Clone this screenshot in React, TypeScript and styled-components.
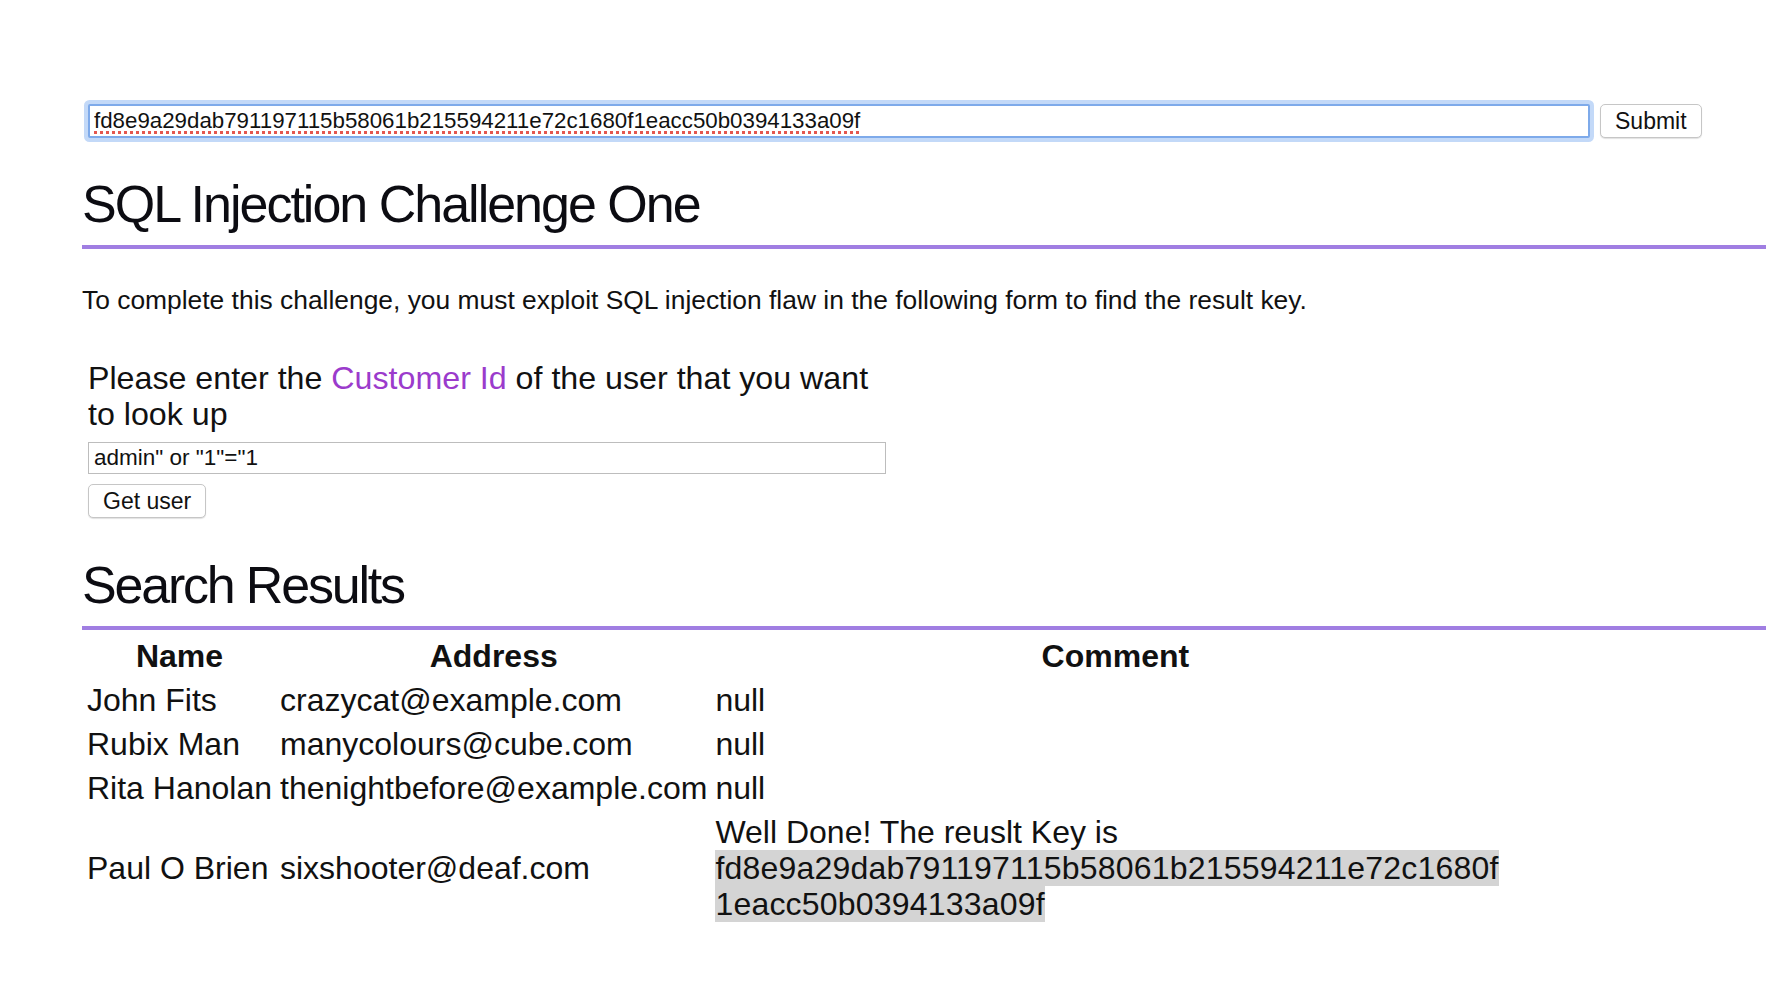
import React from 'react'
import styled, { createGlobalStyle } from 'styled-components'

const RESULT_KEY = 'fd8e9a29dab791197115b58061b215594211e72c1680f1eacc50b0394133a09f'

const users = [
  { name: 'John Fits', address: 'crazycat@example.com', comment: 'null' },
  { name: 'Rubix Man', address: 'manycolours@cube.com', comment: 'null' },
  { name: 'Rita Hanolan', address: 'thenightbefore@example.com', comment: 'null' },
  { name: 'Paul O Brien', address: 'sixshooter@deaf.com', comment: 'key' },
]

const App = () => {
  return (
    <>
      <GlobalStyle />
      <Page>
        <KeyForm onSubmit={(e) => e.preventDefault()}>
          <KeyInput defaultValue={RESULT_KEY} spellCheck={false} />
          <Button type='submit'>Submit</Button>
        </KeyForm>

        <Heading>SQL Injection Challenge One</Heading>
        <Intro>
          To complete this challenge, you must exploit SQL injection flaw in the following form to find the result key.
        </Intro>

        <LookupForm onSubmit={(e) => e.preventDefault()}>
          <Prompt>
            Please enter the <Accent>Customer Id</Accent> of the user that you want to look up
          </Prompt>
          <TextField defaultValue={'admin" or "1"="1'} />
          <Button type='submit' $top={10}>
            Get user
          </Button>
        </LookupForm>

        <Heading as='h2' $top={37} $bottom={11} $tracking={-2.2}>
          Search Results
        </Heading>

        <Results>
          <thead>
            <tr>
              <Th>Name</Th>
              <Th>Address</Th>
              <Th>Comment</Th>
            </tr>
          </thead>
          <tbody>
            {users.map((u) => (
              <tr key={u.name}>
                <Td>{u.name}</Td>
                <Td>{u.address}</Td>
                <Td $wide>
                  {u.comment === 'key' ? (
                    <>
                      Well Done! The reuslt Key is <Selected>{RESULT_KEY}</Selected>
                    </>
                  ) : (
                    u.comment
                  )}
                </Td>
              </tr>
            ))}
          </tbody>
        </Results>
      </Page>
    </>
  )
}

export default App

const GlobalStyle = createGlobalStyle`
  html, body {
    margin: 0;
    background: #ffffff;
  }

  body {
    font-family: "Liberation Sans", Arial, Helvetica, sans-serif;
    color: #111111;
  }
`

const Page = styled.div`
  padding: 104px 4px 40px 82px;
`

const KeyForm = styled.form`
  display: flex;
  align-items: center;
  gap: 10px;
  margin-left: 6px;
`

const KeyInput = styled.input`
  box-sizing: border-box;
  width: 1502px;
  height: 34px;
  padding: 0 4px;
  border: 2px solid #7eaaea;
  border-radius: 2px;
  box-shadow: 0 0 0 4px #c3d9f8;
  outline: none;
  font-family: inherit;
  font-size: 22.3px;
  color: #111111;
  text-decoration: underline dotted #e5574f;
  text-decoration-thickness: 3px;
  text-underline-offset: 3px;
`

const Button = styled.button<{ $top?: number }>`
  box-sizing: border-box;
  height: 34px;
  margin-top: ${(p) => p.$top ?? 0}px;
  padding: 0 14px;
  background: #ffffff;
  border: 1px solid #c6c6c6;
  border-radius: 5px;
  box-shadow: 0 1px 1px rgba(0, 0, 0, 0.12);
  font-family: inherit;
  font-size: 23px;
  color: #111111;
  cursor: pointer;
`

const Heading = styled.h1<{ $top?: number; $bottom?: number; $tracking?: number }>`
  margin: ${(p) => p.$top ?? 36}px 0 0;
  padding-bottom: ${(p) => p.$bottom ?? 11}px;
  border-bottom: 4px solid #a07ee2;
  font-size: 52px;
  font-weight: 400;
  line-height: 60px;
  letter-spacing: ${(p) => p.$tracking ?? -2}px;
  color: #0c0c12;
`

const Intro = styled.p`
  margin: 36px 0 0;
  font-size: 26.4px;
  line-height: 30px;
`

const LookupForm = styled.form`
  display: flex;
  flex-direction: column;
  align-items: flex-start;
  width: 800px;
  margin-top: 45px;
  padding-left: 6px;
`

const Prompt = styled.div`
  font-size: 32.2px;
  line-height: 36px;
`

const Accent = styled.span`
  color: #9b3bcc;
`

const TextField = styled.input`
  box-sizing: border-box;
  width: 798px;
  height: 32px;
  margin-top: 10px;
  padding: 0 5px;
  border: 1px solid #bdbdbd;
  outline: none;
  font-family: inherit;
  font-size: 22.5px;
  color: #111111;
`

const Results = styled.table`
  margin-top: 3px;
  border-spacing: 2px;
  font-size: 32px;
  line-height: 36px;
`

const Th = styled.th`
  padding: 3px;
  font-weight: 700;
  text-align: center;
`

const Td = styled.td<{ $wide?: boolean }>`
  padding: 3px;
  white-space: ${(p) => (p.$wide ? 'normal' : 'nowrap')};
  width: ${(p) => (p.$wide ? '800px' : 'auto')};
  overflow-wrap: anywhere;
`

const Selected = styled.span`
  background: #d4d4d4;
  letter-spacing: 0.2px;
`
